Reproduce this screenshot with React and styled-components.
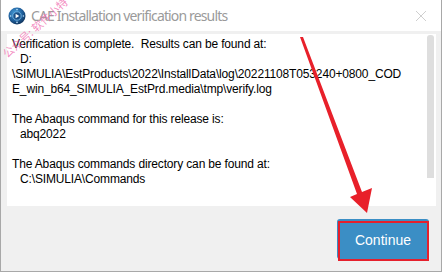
import React from 'react';
import styled, { createGlobalStyle } from 'styled-components';

const GlobalStyle = createGlobalStyle`
  html, body {
    margin: 0;
    padding: 0;
    background: #f0f0f0;
  }
`;

const Window = styled.div`
  position: relative;
  width: 442px;
  height: 272px;
  box-sizing: border-box;
  background: #f0f0f0;
  border: 1px solid #a8a8a8;
  border-top: none;
  display: flex;
  flex-direction: column;
  overflow: hidden;
  font-family: 'Liberation Sans', Arial, sans-serif;
`;

const TitleBar = styled.div`
  height: 31px;
  flex: none;
  background: #ffffff;
  display: flex;
  align-items: center;
  padding: 0 10px 0 7px;
`;

const Title = styled.span`
  margin-left: 5px;
  font-family: 'Noto Sans', 'Liberation Sans', sans-serif;
  font-size: 14px;
  color: #9a9a9a;
  flex: 1;
  letter-spacing: -0.85px;
`;

const CloseButton = styled.div`
  width: 12px;
  height: 12px;
  margin-right: 4px;
  display: flex;
  align-items: center;
  justify-content: center;
`;

const Body = styled.div`
  flex: 1;
  display: flex;
  flex-direction: column;
  padding: 3px 5px 0 6px;
`;

const Panel = styled.div`
  height: 172px;
  background: #ffffff;
  display: flex;
`;

const Log = styled.div`
  flex: 1;
  padding: 3px 0 0 5px;
  font-size: 12px;
  line-height: 15px;
  letter-spacing: -0.15px;
  color: #000000;
  white-space: pre;
`;

const Line = styled.div`
  height: 15px;
  padding-left: ${p => (p.$indent ? '8px' : '0')};
`;

const Scrollbar = styled.div`
  width: 7px;
  margin: 1px 2px 0 0;
  height: 143px;
  background: #dedede;
  border-radius: 3px 3px 0 0;
`;

const Footer = styled.div`
  flex: 1;
  display: flex;
  justify-content: flex-end;
  align-items: flex-start;
  padding: 13px 7px 0 0;
`;

const ContinueButton = styled.button`
  position: relative;
  width: 92px;
  height: 40px;
  border: none;
  border-radius: 3px;
  background: #3b8ec5;
  color: #ffffff;
  font-family: 'Liberation Sans', Arial, sans-serif;
  font-size: 14px;
  padding: 2px 0 0;
`;

const RedFrame = styled.span`
  position: absolute;
  left: 1px;
  right: 0;
  top: 2px;
  bottom: -2px;
  border: 2px solid #e5202c;
  pointer-events: none;
`;

const Arrow = styled.svg`
  position: absolute;
  left: 0;
  top: 0;
  pointer-events: none;
`;

const Watermark = styled.span`
  position: absolute;
  left: -14px;
  top: 21px;
  width: 96px;
  text-align: center;
  transform: rotate(-42deg);
  font-family: 'Noto Sans CJK SC', sans-serif;
  font-size: 11px;
  line-height: 13px;
  color: rgba(240, 110, 175, 0.8);
  white-space: nowrap;
  pointer-events: none;
`;

const AppIcon = () => (
  <svg width="18" height="18" viewBox="0 0 18 18">
    <defs>
      <radialGradient id="g" cx="0.4" cy="0.35" r="0.7">
        <stop offset="0" stopColor="#4aa3df" />
        <stop offset="0.6" stopColor="#1f5f9c" />
        <stop offset="1" stopColor="#0c2c52" />
      </radialGradient>
    </defs>
    <circle cx="9" cy="9" r="8.5" fill="url(#g)" />
    <circle cx="9" cy="9" r="4.2" fill="#1a4f86" stroke="#7fc2ee" strokeWidth="0.8" />
    <path d="M7.6 6.8 L11.2 9 L7.6 11.2 Z" fill="#ffffff" />
    <circle cx="9" cy="2.6" r="0.8" fill="#bfe2fa" />
    <circle cx="9" cy="15.4" r="0.8" fill="#bfe2fa" />
    <circle cx="2.6" cy="9" r="0.8" fill="#bfe2fa" />
    <circle cx="15.4" cy="9" r="0.8" fill="#bfe2fa" />
  </svg>
);

const lines = [
  { text: 'Verification is complete.  Results can be found at:' },
  { text: 'D:', indent: true },
  { text: '\\SIMULIA\\EstProducts\\2022\\InstallData\\log\\20221108T053240+0800_COD' },
  { text: 'E_win_b64_SIMULIA_EstPrd.media\\tmp\\verify.log' },
  { text: '' },
  { text: 'The Abaqus command for this release is:' },
  { text: 'abq2022', indent: true },
  { text: '' },
  { text: 'The Abaqus commands directory can be found at:' },
  { text: 'C:\\SIMULIA\\Commands', indent: true },
];

export default function App() {
  return (
    <>
      <GlobalStyle />
      <Window>
        <TitleBar>
          <AppIcon />
          <Title>CAE Installation verification results</Title>
          <CloseButton>
            <svg width="12" height="12" viewBox="0 0 12 12">
              <path d="M1 1 L11 11 M11 1 L1 11" stroke="#cfcfcf" strokeWidth="1" />
            </svg>
          </CloseButton>
        </TitleBar>
        <Body>
          <Panel>
            <Log>
              {lines.map((l, i) => (
                <Line key={i} $indent={l.indent}>{l.text}</Line>
              ))}
            </Log>
            <Scrollbar />
          </Panel>
          <Footer>
            <ContinueButton>
              Continue
              <RedFrame />
            </ContinueButton>
          </Footer>
        </Body>
        <Arrow width="442" height="272" viewBox="0 0 442 272">
          <polygon
            points="299,37 302,37 361,192 371,188 366,213 349,197 356,194"
            fill="#e8202a"
          />
        </Arrow>
        <Watermark>公众号: 软件小特</Watermark>
      </Window>
    </>
  );
}
